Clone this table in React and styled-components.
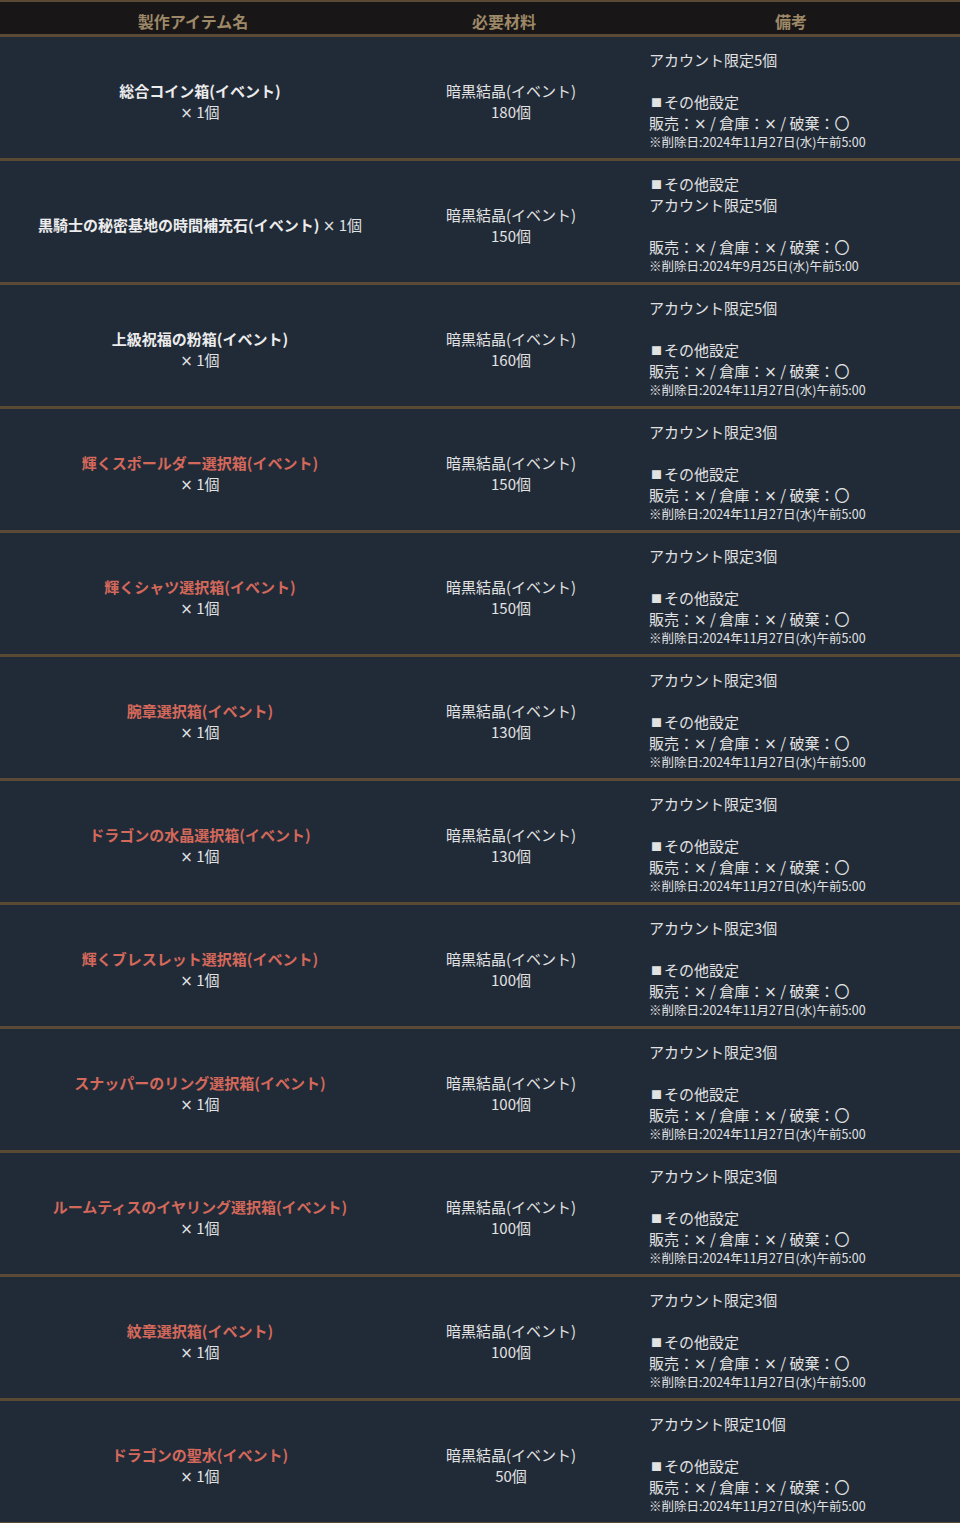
import React from 'react'
import styled, { createGlobalStyle } from 'styled-components'

const GlobalStyle = createGlobalStyle`
    html, body {
        margin: 0;
        padding: 0;
        background: #212b38;
    }
    body {
        font-family: "Noto Sans CJK JP", "Noto Sans", sans-serif;
        color: #e2e2e2;
    }
`

const DATE_A = '※削除日:2024年11月27日(水)午前5:00'
const DATE_B = '※削除日:2024年9月25日(水)午前5:00'

const rows = [
    { name: '総合コイン箱(イベント)', red: false, cost: 180, limit: 5 },
    { name: '黒騎士の秘密基地の時間補充石(イベント)', red: false, cost: 150, limit: 5, inline: true, swap: true, date: DATE_B },
    { name: '上級祝福の粉箱(イベント)', red: false, cost: 160, limit: 5 },
    { name: '輝くスポールダー選択箱(イベント)', red: true, cost: 150, limit: 3 },
    { name: '輝くシャツ選択箱(イベント)', red: true, cost: 150, limit: 3 },
    { name: '腕章選択箱(イベント)', red: true, cost: 130, limit: 3 },
    { name: 'ドラゴンの水晶選択箱(イベント)', red: true, cost: 130, limit: 3 },
    { name: '輝くブレスレット選択箱(イベント)', red: true, cost: 100, limit: 3 },
    { name: 'スナッパーのリング選択箱(イベント)', red: true, cost: 100, limit: 3 },
    { name: 'ルームティスのイヤリング選択箱(イベント)', red: true, cost: 100, limit: 3 },
    { name: '紋章選択箱(イベント)', red: true, cost: 100, limit: 3 },
    { name: 'ドラゴンの聖水(イベント)', red: true, cost: 50, limit: 10 },
]

function Remarks({ row }) {
    const limit = <Line>アカウント限定{row.limit}個</Line>
    const setting = <Line><Mark>■</Mark>その他設定</Line>
    const blank = <Line>&nbsp;</Line>
    return (
        <RemarkCell>
            {row.swap ? (
                <>
                    {setting}
                    {limit}
                    {blank}
                </>
            ) : (
                <>
                    {limit}
                    {blank}
                    {setting}
                </>
            )}
            <Line>販売：<Cross>×</Cross> / 倉庫：<Cross>×</Cross> / 破棄：〇</Line>
            <DateLine>{row.date || DATE_A}</DateLine>
        </RemarkCell>
    )
}

export default function App() {
    return (
        <Table>
            <GlobalStyle />
            <Head>
                <HeadCell>製作アイテム名</HeadCell>
                <HeadCell>必要材料</HeadCell>
                <HeadCell>備考</HeadCell>
            </Head>
            {rows.map((row, i) => (
                <Row key={i}>
                    <CenterCell>
                        {row.inline ? (
                            <Line>
                                <ItemName red={row.red}>{row.name}</ItemName> <Cross>×</Cross> 1個
                            </Line>
                        ) : (
                            <>
                                <Line><ItemName red={row.red}>{row.name}</ItemName></Line>
                                <Line><Cross>×</Cross> 1個</Line>
                            </>
                        )}
                    </CenterCell>
                    <CenterCell>
                        <Line>暗黒結晶(イベント)</Line>
                        <Line>{row.cost}個</Line>
                    </CenterCell>
                    <Remarks row={row} />
                </Row>
            ))}
        </Table>
    )
}

const Table = styled.div`
    width: 960px;
    display: flex;
    flex-direction: column;
    background: #212b38;
    border-top: 2px solid #5a4935;
`

const Head = styled.div`
    display: grid;
    grid-template-columns: 386px 236px 1fr;
    height: 32px;
    background: #181616;
    border-bottom: 3px solid #5a4935;
`

const HeadCell = styled.div`
    display: flex;
    justify-content: center;
    align-items: center;
    padding-top: 6px;
    font-size: 16px;
    font-weight: bold;
    color: #9d8867;
`

const Row = styled.div`
    display: grid;
    grid-template-columns: 400px 222px 1fr;
    background: #212b38;
    border-bottom: 3px solid #5a4935;
`

const CenterCell = styled.div`
    display: flex;
    flex-direction: column;
    justify-content: center;
    align-items: center;
    padding-top: 6px;
    text-align: center;
    font-size: 15px;
`

const RemarkCell = styled.div`
    display: flex;
    flex-direction: column;
    padding: 12px 0 7px 27px;
    font-size: 15px;
`

const Line = styled.div`
    line-height: 21px;
    white-space: nowrap;
`

const Mark = styled.span`
    font-size: 11px;
    line-height: 0;
    margin: 0 2px 0 2px;
    vertical-align: 1px;
`

const Cross = styled.span`
    font-family: "DejaVu Sans", sans-serif;
    font-size: 15px;
    line-height: 0;
`

const DateLine = styled.div`
    font-size: 12.5px;
    line-height: 18px;
    white-space: nowrap;
`

const ItemName = styled.span`
    font-weight: bold;
    color: ${props => (props.red ? '#d4685a' : '#ececec')};
`
